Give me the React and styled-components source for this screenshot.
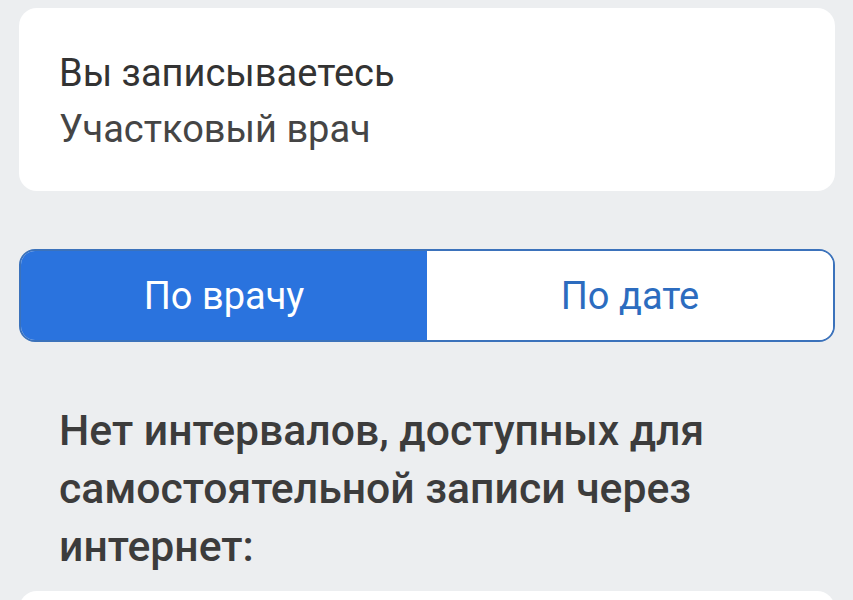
import { createGlobalStyle, styled } from "styled-components";

const GlobalStyle = createGlobalStyle`
  html, body {
    margin: 0;
    padding: 0;
    background: #eceef0;
    font-family: Roboto, "Noto Sans", sans-serif;
  }
`;

const Page = styled.div`
  padding: 8px 18px 0 19px;
  display: flex;
  flex-direction: column;
`;

const InfoCard = styled.div`
  background: #fff;
  border-radius: 18px;
  height: 183px;
  box-sizing: border-box;
  padding: 37px 40px 0;
  display: flex;
  flex-direction: column;
  color: #424242;
`;

const InfoLine = styled.div`
  font-size: 38px;
  line-height: 56px;
  color: ${(p) => (p.$strong ? "#333" : "#454545")};
`;

const Toggle = styled.div`
  margin-top: 58px;
  height: 93px;
  box-sizing: border-box;
  border: 2px solid #3b72bb;
  border-radius: 16px;
  overflow: hidden;
  display: flex;
  background: #fff;
`;

const ToggleButton = styled.div`
  flex: 1;
  display: flex;
  align-items: center;
  justify-content: center;
  font-size: 38px;
  background: ${(p) => (p.$active ? "#2a73de" : "#fff")};
  color: ${(p) => (p.$active ? "#fff" : "#2c6cbf")};
`;

const Heading = styled.h2`
  margin: 59px 0 0;
  padding: 0 40px;
  font-size: 42.7px;
  line-height: 58px;
  font-weight: 500;
  color: #3c3c3c;
`;

const SlotCard = styled.div`
  margin-top: 16px;
  background: #fff;
  border-radius: 18px;
  height: 120px;
`;

export default function App() {
  return (
    <>
      <GlobalStyle />
      <Page>
        <InfoCard>
          <InfoLine $strong>Вы записываетесь</InfoLine>
          <InfoLine>Участковый врач</InfoLine>
        </InfoCard>
        <Toggle>
          <ToggleButton $active>По врачу</ToggleButton>
          <ToggleButton>По дате</ToggleButton>
        </Toggle>
        <Heading>
          Нет интервалов, доступных для самостоятельной записи через интернет:
        </Heading>
        <SlotCard />
      </Page>
    </>
  );
}
